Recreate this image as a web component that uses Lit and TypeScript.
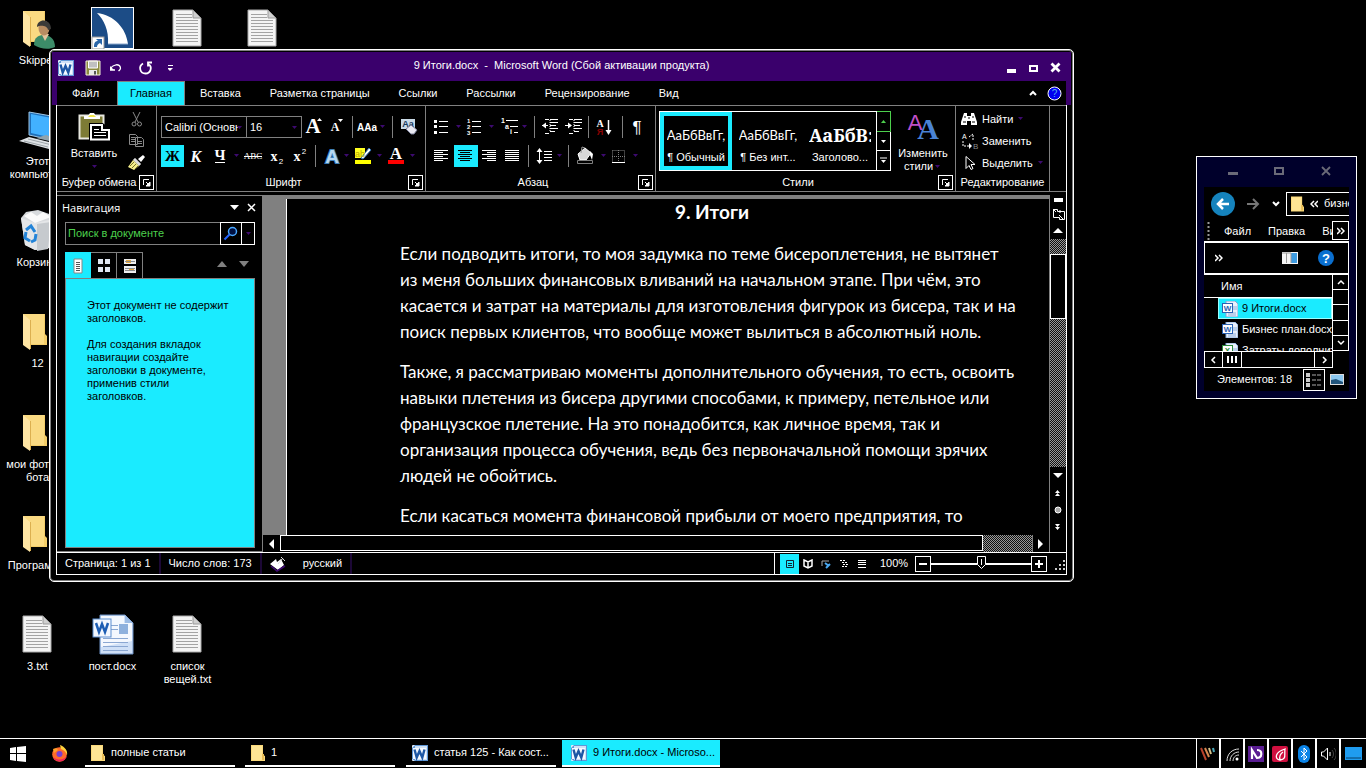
import { LitElement, html, svg, css } from "lit";
import { customElement } from "lit/decorators.js";

const ic = (w: number, h: number, body: unknown, box = `0 0 ${w} ${h}`) =>
  html`<svg width=${w} height=${h} viewBox=${box} aria-hidden="true">${body}</svg>`;

const shared = css`
  * { box-sizing: border-box; }
  svg { display: block; flex: none; }
  button, select, input {
    font: inherit; color: inherit; background: none; border: 0; padding: 0; margin: 0;
    border-radius: 0; outline: none; appearance: none;
  }
  button { display: flex; align-items: center; justify-content: center; white-space: nowrap; }
`;

const wordLogo = (s: number) => ic(s, s, svg`
  <rect x="0" y="0" width="16" height="16" rx="1" fill="#e4eefa"/>
  <path d="M0 3l3-3h13v16H3l-3-2z" fill="#5f97d6"/><path d="M3 1h12v14H3z" fill="#cfe1f6"/>
  <rect x="1" y="3" width="13" height="11" fill="#f4f9ff"/>
  <path d="M2.500 4.500l2.200 8 2.800-6.500 2.800 6.500 2.200-8" fill="none" stroke="#1d57a5" stroke-width="2.400"/>`, "0 0 16 16");

const smallFolder = (w: number, h: number) => ic(w, h, svg`
  <path d="M0 0h12v10l2 1v5H0z" fill="#fbd97b"/><path d="M1 1h10v14H1z" fill="#ffe594"/>
  <path d="M11 9h2v6h-2z" fill="#e9bd55"/>`, "0 0 14 16");

const desktopFolder = svg`
  <path d="M11 5h22v20l2 2v9H11z" fill="#f3cd68"/><path d="M12 5h20v30H19z" fill="#fada82"/>
  <path d="M11 5l7 6v30l-7-5z" fill="#ffe6a4"/><path d="M18.500 11v29" stroke="#dcb050" stroke-width="1"/>`;
const textSheet = svg`
  <path d="M11 4h20l8 8v28H11z" fill="#f4f4f4" stroke="#aaa"/><path d="M31 4v8h8z" fill="#cfcfcf" stroke="#999"/>
  <path d="M14 8.500h16M14 11.500h16M14 14.500h22M14 17.500h22M14 20.500h22M14 23.500h22M14 26.500h22M14 29.500h22M14 32.500h22M14 35.500h22" stroke="#a3a3a3"/>`;
const pictures: Record<string, unknown> = {
  folder: desktopFolder,
  text: textSheet,
  user: svg`${desktopFolder}
    <path d="M22 39c0-8 5-10 10-10s11 3 11 12c-6 3-15 2-21-2z" fill="#3c8b68"/><path d="M29 27l4 8 4-7z" fill="#e3c49d"/>
    <ellipse cx="32" cy="22" rx="5.500" ry="7.500" fill="#b98d62"/><path d="M25 21c0-9 14-9 14 2l-3 1c0-4-6-5-9-4z" fill="#3b3a38"/>`,
  shark: svg`<rect x="4" y="1" width="43" height="42" fill="#fff"/><rect x="5" y="2" width="41" height="40" fill="#1c4c86"/>
    <path d="M10 7c17 2 29 15 31 31H21C22 24 17 14 10 7z" fill="#fff"/><path d="M21 38h20" stroke="#8aa7cc"/>
    <rect x="5" y="31" width="12" height="12" fill="#fff" stroke="#999"/><path d="M7 41c0-4 1-6 4-6l-2-2h6v6l-2-2c-2 1-3 2-3 4z" fill="#2a66a8"/>`,
  computer: svg`<path d="M17 5l28 5v24l-28-6z" fill="#1f6fb8" stroke="#9dc6e6"/><path d="M19 7l26 5v20l-26-6z" fill="#42b1ff"/>
    <path d="M24 31l10-3 12 4v4z" fill="#8fa3ad"/><path d="M7 34l10-4 28 7-8 5z" fill="#dfe3e6"/><path d="M12 34l24 6M16 32l24 6" stroke="#9ba3a8"/>`,
  bin: svg`<path d="M9 10l5-6 12-2 14 5 2 7-5 26-14 2-10-5z" fill="#d7dadd"/><path d="M9 10l14 5 19-4-5 29-14 2-10-5z" fill="#e4e6e8"/>
    <path d="M25 16l14-2-3 27-11 2z" fill="#c6cace"/><path d="M12 8l7-4 6 4 6-4 8 5-16 6z" fill="#fafafa"/>
    <path d="M14 22l5-4 4 6M14 24l-1 6 5 3M24 26l-1 6-4 2" fill="none" stroke="#2384d8" stroke-width="3"/>`,
  docx: svg`<path d="M13 3h25l8 8v31H13z" fill="#cfe0f7" stroke="#6d91c4"/><path d="M14 4h23v7h8v18l-31 6z" fill="#f4f8fe"/>
    <path d="M38 3v8h8z" fill="#9dbce4"/><rect x="32" y="12" width="9" height="10" fill="#8fb1dd"/>
    <path d="M24 13.500h7M24 17.500h7M16 26.500h25M16 30.500h25M16 34.500h25M16 38.500h25" stroke="#8aa7d2"/>
    <rect x="6" y="7" width="18" height="18" fill="#f3f8ff" stroke="#5d8fd0"/><path d="M9 11l3 9 3-8 3 8 3-9" fill="none" stroke="#1d5eb4" stroke-width="2.500"/>`,
};

const desktopItems = [
  { col: 1, row: 1, pic: "user", label: "Skipper" },
  { col: 2, row: 1, pic: "shark", label: "" },
  { col: 3, row: 1, pic: "text", label: "" },
  { col: 4, row: 1, pic: "text", label: "" },
  { col: 1, row: 2, pic: "computer", label: "Этот компьютер" },
  { col: 1, row: 3, pic: "bin", label: "Корзина" },
  { col: 1, row: 4, pic: "folder", label: "12" },
  { col: 1, row: 5, pic: "folder", label: "мои фотки с бота" },
  { col: 1, row: 6, pic: "folder", label: "Программы" },
  { col: 1, row: 7, pic: "text", label: "3.txt" },
  { col: 2, row: 7, pic: "docx", label: "пост.docx" },
  { col: 3, row: 7, pic: "text", label: "список вещей.txt" },
];

const arrow = html`<svg class="dd" width="9" height="22" viewBox="0 0 9 22" aria-hidden="true"><path d="M2 9h5L4.500 12z" fill="#3d0a70"/></svg>`;
const sep = (w: number) => ic(w, 22, svg`<rect x=${Math.floor(w / 2)} y="0" width="1" height="22" fill="#808080"/>`);
const tool = (label: string, w: number, body: unknown, cls = "") =>
  html`<button class=${cls} aria-label=${label}>${ic(w, 22, body)}</button>`;
const lines = (d: string) => svg`<path d=${d} stroke="currentColor" stroke-width="1" fill="none"/>`;
const launcher = (label: string) => html`<button class="launch" aria-label=${label}>${ic(13, 13, svg`
  <path d="M3.500 9V3.500H9" stroke="#fff" fill="none"/><path d="M6 6l3 3M10 6v4H6z" stroke="#fff" fill="#fff"/>`)}</button>`;

@customElement("word-window")
export class WordWindow extends LitElement {
  static styles = [shared, css`
    :host { display: flex; flex-direction: column; background: #000; color: #fff; padding: 2px;
      border: 1px solid #fff; border-radius: 5px; box-shadow: inset 0 0 0 1px #808080; overflow: hidden; }
    .head { background: #3a006c; }
    .title { display: grid; grid-template-columns: 1fr auto 1fr; align-items: center; height: 29px; }
    .title span { padding-bottom: 3px; }
    .quick { display: flex; align-items: center; gap: 7px; padding: 3px 0 0 6px; }
    .caption { display: flex; justify-content: flex-end; gap: 11px; padding: 3px 10px 0 0; }
    .tabs { display: flex; align-items: stretch; height: 24px; margin: 0 5px; background: #000; }
    .tabs .tab { padding: 0 13px 0 14px; border: 1px solid #000; border-bottom: 0; }
    .tabs .on { background: #1aebff; color: #000; border-color: #808080; padding: 0 12px; margin-left: 4px; }
    .tabs .end { margin-left: auto; display: flex; align-items: center; gap: 10px; padding-right: 4px; }
    .frame { flex: 1; min-height: 0; display: flex; flex-direction: column; margin: 0 4px;
      border: 1px solid #fff; border-top: 0; }
    .under { height: 4px; }
    .ribbon { display: flex; height: 87px; border: solid #808080; border-width: 1px 0; }
    .group { display: flex; flex-direction: column; border-right: 1px solid #808080; flex: none; }
    .gclip { width: 100px; } .gfont { width: 269px; } .gpar { width: 230px; } .gstyle { width: 300px; } .gedit { width: 94px; }
    .tools { flex: 1; min-height: 0; display: flex; flex-direction: column; padding: 10px 0 0 4px; gap: 7px; }
    .tools.row { flex-direction: row; align-items: flex-start; padding: 5px 0 0 3px; gap: 0; }
    .line { display: flex; height: 22px; }
    .foot { display: flex; align-items: center; flex: none; height: 17px; padding: 0 2px 1px; }
    .foot span { flex: 1; text-align: center; white-space: nowrap; }
    .launch { width: 15px; height: 15px; border: 1px solid #fff; }
    .sel { background: #1aebff; color: #000; }
    .paste { flex-direction: column; justify-content: flex-start; width: 68px; }
    .paste .dd, .change .dd { margin: -4px 0; }
    .side { display: flex; flex-direction: column; }
    .combo { display: flex; position: relative; border: 1px solid #808080; height: 22px; }
    .combo + .combo { border-left: 0; }
    .combo select { width: 100%; padding: 0 8px 0 3px; overflow: hidden; text-overflow: clip; }
    .combo .dd { position: absolute; right: 2px; top: 0; }
    .c1 { width: 86px; } .c2 { width: 55px; }
    .gallery { display: flex; border: 1px solid #fff; height: 60px; }
    .style { flex-direction: column; width: 72px; border: 4px solid transparent; overflow: hidden; justify-content: flex-end; gap: 6px; padding-bottom: 2px; }
    .style.on { border-color: #1aebff; }
    .style b { font: 13px/20px Lato, sans-serif; max-width: 62px; overflow: hidden; }
    .style .h { font: bold 18px/20px "Noto Serif", "DejaVu Serif", "Liberation Serif", serif; }
    .ups { display: flex; flex-direction: column; margin: -1px -1px -1px 0; border-left: 1px solid #fff; }
    .ups button { flex: 1; width: 14px; border: 1px solid #fff; border-left: 0; }
    .ups button + button { border-top: 0; }
    .ups .g { border-color: #4dd04d; }
    .change { flex-direction: column; justify-content: flex-start; width: 64px; line-height: 13px; }
    .change i { display: flex; font-style: normal; }
    .edit { display: flex; flex-direction: column; padding: 2px 3px 0; flex: 1; align-items: flex-start; }
    .edit button { height: 22px; gap: 3px; }
    .work { flex: 1; min-height: 0; display: flex; padding-top: 3px; }
    .nav { width: 205px; flex: none; display: flex; flex-direction: column; padding: 0 7px 3px 8px; border: solid #808080; border-width: 1px 0; }
    .navhead { display: flex; align-items: center; height: 23px; gap: 8px; margin: 0 -1px 0 -3px; font: 11px/22px "Open Sans", "Noto Sans", sans-serif; }
    .navhead span { flex: 1; }
    .search { display: flex; height: 23px; margin: 3px 0 7px; border: 1px solid #808080; }
    .search input { flex: 1; min-width: 0; padding-left: 2px; color: #4dd04d; }
    .search input::placeholder { color: #4dd04d; opacity: 1; }
    .search button { width: 22px; border: 1px solid #fff; margin: -1px 0; }
    .search .more { width: 13px; border-left: 0; margin-right: -1px; }
    .ntabs { display: flex; height: 26px; align-items: stretch; }
    .ntabs .t { width: 26px; border: 1px solid #808080; border-width: 1px 1px 0 0; }
    .ntabs .on { background: #1aebff; border-color: #1aebff; }
    .ntabs .move { margin-left: auto; display: flex; align-items: center; gap: 12px; padding-right: 6px; }
    .panel { flex: 1; background: #1aebff; border: 1px solid #808080; color: #000; padding: 20px 24px 0 21px; }
    .panel p { margin: 0 0 13px; line-height: 13px; }
    .view { flex: 1; min-width: 0; display: flex; flex-direction: column; }
    .canvas { flex: 1; min-height: 0; background: #808080; padding: 4px 0 0 24px; overflow: hidden; }
    .page { height: 100%; background: #000; border-left: 1px solid #fff; padding-left: 113px; overflow: hidden;
      font: 17px/26px Lato, "Noto Sans", sans-serif; white-space: nowrap; }
    .page h1 { font-size: 19px; line-height: 26px; margin: 0 0 16px; width: 624px; text-align: center; }
    .page p { margin: 0 0 14px; }
    .page span { display: block; }
    .hscroll { display: flex; height: 17px; }
    .hscroll button { width: 17px; border-left: 1px solid #808080; }
    .hthumb { flex: 702; border: 1px solid #fff; background: #000; margin-left: 1px; height: 16px; }
    .dots { background: conic-gradient(#999 25%, #111 0 50%, #999 0 75%, #111 0) 0 0 / 2px 2px; }
    .hscroll .dots { flex: 49; }
    .vscroll { width: 17px; flex: none; display: flex; flex-direction: column; border-left: 1px solid #808080; }
    .vscroll button { width: 16px; height: 17px; flex: none; }
    .vscroll .split { height: 10px; }
    .vscroll .t0 { flex: 15; } .vscroll .t1 { flex: 151; }
    .vthumb { flex: 65; border: 1px solid #fff; background: #000; }
    .status { display: flex; align-items: center; height: 22px; border-top: 1px solid #fff; }
    .status .cell { display: flex; align-items: center; height: 21px; padding: 0 8px; border-right: 2px solid #1c0836; white-space: nowrap; }
    .status .right { margin-left: auto; display: flex; align-items: center; height: 21px; border-left: 1px solid #fff; padding-left: 5px; }
    .status .right button { width: 18px; height: 20px; }
    .status .right .sel { width: 19px; }
    .status .right .pct { width: 46px; margin-right: -2px; }
    .status .right .sq { width: 16px; height: 16px; border: 1px solid #fff; }
    .zoom { width: 100px; height: 18px; }
    .zoom::-webkit-slider-runnable-track { height: 2px; background: #fff; }
    .zoom::-webkit-slider-thumb { appearance: none; width: 9px; height: 14px; margin-top: -7px;
      background: url("data:image/svg+xml,%3Csvg xmlns='http://www.w3.org/2000/svg' width='9' height='14'%3E%3Cpath d='M.5.5h8v8l-4 4-4-4z' fill='%23000' stroke='%23fff'/%3E%3Cpath d='M4 3h1v6h-1z' fill='%23fff'/%3E%3C/svg%3E"); }
    .grip { margin: 4px 0 0 7px; }
  `];

  render() {
    const A = (x: number, y: number, s: number, t: string, extra = "") =>
      svg`<text x=${x} y=${y} font-size=${s} text-anchor="middle" fill="currentColor" font-family="Liberation Serif, serif" font-weight="bold" font-style=${extra || "normal"}>${t}</text>`;
    return html`
      <div class="head">
        <div class="title">
          <div class="quick">
            ${wordLogo(16)}
            <button aria-label="Сохранить">${ic(22, 16, svg`<path d="M1 1h14v14H1z" fill="#8c8a3f"/><path d="M3.500 1h9v7h-9z" fill="#c0c0c0" stroke="#fff"/><path d="M4 10h8v5H4z" fill="#e8e8e8"/><path d="M9 11h2v4H9z" fill="#555"/><path d="M1 1h14v14H1z" fill="none" stroke="#f4f4d8"/>`, "-4 0 22 16")}</button>
            <button aria-label="Отменить">${ic(14, 14, svg`<path d="M1 3v6h6M1.500 8.500C5 3 12 2 12.500 7c0 2-1 2-2 3" fill="none" stroke="#fff" stroke-width="1.300"/><path d="M1 4v5h5z" fill="#fff"/>`, "2 0 14 14")}</button>
            <button aria-label="Повторить">${ic(30, 14, svg`<path d="M13 2.500c-5 3-3 10 2.500 10s7-7 3-9M22 1.500h-4v4" fill="none" stroke="#fff" stroke-width="1.800"/>`, "1 0 30 14")}</button>
            <button aria-label="Настройка панели">${ic(8, 8, svg`<path d="M1 1.500h6" stroke="#fff"/><path d="M1 4h6L4 7z" fill="#fff"/>`, "2 0 8 8")}</button>
          </div>
          <span>9 Итоги.docx&nbsp; -&nbsp; Microsoft Word (Сбой активации продукта)</span>
          <div class="caption">
            <button aria-label="Свернуть">${ic(11, 12, svg`<path d="M1 7h9v4H1z" fill="#fff"/>`)}</button>
            <button aria-label="Развернуть">${ic(11, 12, svg`<path d="M2 4h7v5H2z" fill="none" stroke="#fff" stroke-width="2"/>`)}</button>
            <button aria-label="Закрыть">${ic(11, 12, svg`<path d="M1.500 1.500l8 8M9.500 1.500l-8 8" stroke="#fff" stroke-width="2.800"/>`)}</button>
          </div>
        </div>
        <div class="tabs">
          <button class="tab">Файл</button><button class="tab on">Главная</button><button class="tab">Вставка</button>
          <button class="tab">Разметка страницы</button><button class="tab">Ссылки</button><button class="tab">Рассылки</button>
          <button class="tab">Рецензирование</button><button class="tab">Вид</button>
          <div class="end">
            <button aria-label="Свернуть ленту">${ic(8, 8, svg`<path d="M1 6l3-3 3 3" fill="none" stroke="#fff" stroke-width="2"/>`)}</button>
            <button aria-label="Справка">${ic(15, 15, svg`<circle cx="7.500" cy="7.500" r="6.500" fill="#0000f0" stroke="#fff"/><text x="7.500" y="11" font-size="10" text-anchor="middle" fill="#58b0e8">?</text>`)}</button>
          </div>
        </div>
      </div>
      <div class="frame">
        <div class="ribbon">
          <div class="group gclip">
            <div class="tools row">
              <button class="paste">${ic(34, 36, svg`<path d="M2 4h24v24H2z" fill="#7d7b35"/><path d="M2.500 4.500h24v23h-24z" fill="none" stroke="#e8e8e0" stroke-width="2"/><path d="M7 8V5h4l2-3h4l2 3h4v3z" fill="#fff"/><path d="M11 6h8l-2-2h-4z" fill="#f2e64a"/><path d="M14 14h11l7 5v9H14z" fill="#000" stroke="#000" stroke-width="4"/><path d="M14 14h11v5h7v9.500H14z" fill="#000" stroke="#fff" stroke-width="2"/><path d="M17 18.500h5M17 21.500h12M17 24.500h12" stroke="#fff"/>`)}Вставить${arrow}</button>
              <div class="side">
                ${tool("Вырезать", 20, svg`<path d="M5 1l5 10M12 1L7 11" stroke="#8a8a8a" fill="none"/><circle cx="6" cy="13" r="2" fill="none" stroke="#8a8a8a"/><circle cx="11.500" cy="13" r="2" fill="none" stroke="#8a8a8a"/>`, "cut")}
                ${tool("Копировать", 20, svg`<path d="M1.500 1.500h6l2 2v8h-8zM7.500 4.500h6l2 2v7h-8z" fill="#000" stroke="#8a8a8a"/><path d="M3 4.500h4M3 6.500h4M3 8.500h4M9 8.500h5M9 10.500h5" stroke="#8a8a8a"/>`)}
                ${tool("Формат по образцу", 20, svg`<path d="M15 0l2 2-4 5-3-3z" fill="#fff"/><path d="M7 3l6 6-2 2-6-6z" fill="#ddd" stroke="#888"/><path d="M5 5l6 6-5 4-6-3z" fill="#f4ee8a"/><path d="M2 11l4-4M4 13l4-4M7 14l3-3" stroke="#77722a"/>`)}
              </div>
            </div>
            <div class="foot"><span>Буфер обмена</span>${launcher("Буфер обмена")}</div>
          </div>
          <div class="group gfont">
            <div class="tools">
              <div class="line">
                <label class="combo c1"><select aria-label="Шрифт"><option>Calibri (Основн</option></select>${arrow}</label>
                <label class="combo c2"><select aria-label="Размер"><option>16</option></select>${arrow}</label>
                ${tool("Увеличить размер", 24, svg`${A(11, 17, 21, "A")}<path d="M15 5h5l-2.500-3z" fill="#fff"/>`)}
                ${tool("Уменьшить размер", 24, svg`${A(9, 15, 12, "A")}<path d="M12 3h5l-2.500 3z" fill="#fff"/>`)}
                ${sep(5)}
                ${tool("Регистр", 23, svg`<text x="12" y="15" font-size="10" text-anchor="middle" fill="#fff" font-weight="bold">AAa</text>`)}${arrow}
                ${sep(10)}
                ${tool("Очистить формат", 24, svg`<path d="M4 3h14v10H4z" fill="#c9d9e6"/><text x="11" y="11" font-size="9" font-weight="bold" text-anchor="middle" fill="#16375c">Aa</text><path d="M9 13l5-4 6 5-3 4h-3z" fill="#e9e9f2" stroke="#7b7f99"/>`)}
              </div>
              <div class="line">
                ${tool("Полужирный", 23, A(11.5, 16, 15, "Ж"), "sel")}
                ${tool("Курсив", 24, A(12, 17, 16, "К", "italic"))}
                ${tool("Подчеркнутый", 24, svg`${A(12, 15, 15, "Ч")}<path d="M7 17.500h10" stroke="#fff"/>`)}${arrow}
                ${tool("Зачеркнутый", 24, svg`<text x="12" y="14" font-size="9" text-anchor="middle" fill="#fff" font-family="Liberation Serif">ABC</text><path d="M3 11.500h18" stroke="#fff"/>`)}
                ${tool("Подстрочный", 23, svg`${A(9, 16, 14, "x")}<text x="16" y="19" font-size="8" text-anchor="middle" fill="#fff">2</text>`)}
                ${tool("Надстрочный", 23, svg`${A(9, 16, 14, "x")}<text x="16" y="9" font-size="8" text-anchor="middle" fill="#fff">2</text>`)}
                ${sep(9)}
                ${tool("Эффекты текста", 22, svg`<text x="12" y="18" font-size="19" font-weight="bold" text-anchor="middle" fill="#b8d8f0" stroke="#3f7fb8" stroke-width="2" paint-order="stroke">A</text>`)}${arrow}
                ${tool("Выделение", 24, svg`<path d="M4 3h10v10H4z" fill="#ffff20"/><path d="M4 15h16v4H4z" fill="#ffff00"/><path d="M18 3l2 2-8 9-2-1z" fill="#fff" stroke="#2f6fb0"/><text x="9" y="12" font-size="9" text-anchor="middle" fill="#b8a800">ab</text>`)}${arrow}
                ${tool("Цвет текста", 24, svg`${A(12, 14, 17, "A")}<path d="M4 15h16v4H4z" fill="#f00"/>`)}${arrow}
              </div>
            </div>
            <div class="foot"><span>Шрифт</span>${launcher("Шрифт")}</div>
          </div>
          <div class="group gpar">
            <div class="tools">
              <div class="line">
                ${tool("Маркеры", 24, svg`<path d="M4 4h3v3H4zM4 9h3v3H4zM4 15h3v3H4z" fill="#fff"/>${lines("M9 5.500h9M9 10.500h9M9 16.500h9")}`)}${arrow}
                ${tool("Нумерация", 24, svg`<g font-size="6" fill="#fff" font-weight="bold"><text x="4" y="7">1</text><text x="4" y="13">2</text><text x="4" y="19">3</text></g>${lines("M9 5.500h9M9 10.500h9M9 16.500h9")}`)}${arrow}
                ${tool("Многоуровневый список", 24, svg`<g font-size="7" fill="#fff" font-weight="bold"><text x="5" y="7">1</text><text x="9" y="13">a</text><text x="14" y="18">i</text></g>${lines("M10 4.500h12M14 10.500h8M18 16.500h4")}`)}${arrow}
                ${sep(10)}
                ${tool("Уменьшить отступ", 24, svg`${lines("M6 3.500h4M11 3.500h8M11 6.500h8M11 9.500h6M11 12.500h8M11 15.500h5M6 17.500h4M3 9.500h6")}<path d="M3 9.500l4-3v6z" fill="#fff"/><path d="M11 4v12" stroke="#fff" stroke-dasharray="1 1"/>`)}
                ${tool("Увеличить отступ", 23, svg`${lines("M6 3.500h4M11 3.500h8M11 6.500h8M11 9.500h6M11 12.500h8M11 15.500h5M6 17.500h4M2 9.500h6")}<path d="M9 9.500l-4-3v6z" fill="#fff"/><path d="M11 4v12" stroke="#fff" stroke-dasharray="1 1"/>`)}
                ${sep(5)}
                ${tool("Сортировка", 29, svg`${A(9, 11, 10, "A")}<text x="9" y="19" font-size="9" font-weight="bold" text-anchor="middle" fill="#8c0000">Я</text><path d="M17.500 4v12" stroke="#fff" stroke-width="1.500"/><path d="M14.500 14h6l-3 5z" fill="#fff"/>`)}
                ${sep(4)}
                ${tool("Знаки", 26, svg`<text x="13" y="17" font-size="17" text-anchor="middle" fill="#fff">¶</text>`)}
              </div>
              <div class="line">
                ${tool("По левому краю", 24, lines("M4 5.500h14M4 7.500h9M4 9.500h14M4 11.500h9M4 13.500h14M4 15.500h9"))}
                ${tool("По центру", 24, lines("M4 5.500h14M6 7.500h10M4 9.500h14M6 11.500h10M4 13.500h14M6 15.500h10"), "sel")}
                ${tool("По правому краю", 23, lines("M4 5.500h14M9 7.500h9M4 9.500h14M9 11.500h9M4 13.500h14M9 15.500h9"))}
                ${tool("По ширине", 23, lines("M4 5.500h14M4 7.500h14M4 9.500h14M4 11.500h14M4 13.500h14M4 15.500h14"))}
                ${sep(9)}
                ${tool("Интервал", 22, svg`${lines("M11 6.500h8M11 9.500h8M11 12.500h8M11 15.500h8M6.500 5v13")}<path d="M3.500 7h6l-3-4zM3.500 15h6l-3 4z" fill="#fff"/>`)}${arrow}
                ${sep(8)}
                ${tool("Заливка", 27, svg`<path d="M6 9l7-6 6 5-5 7H8z" fill="#d8d8d8" stroke="#fff"/><path d="M18 6l3 3-1 6-2-5z" fill="#fff"/><path d="M13 3l-3-1-1 6" stroke="#999" fill="none"/><path d="M5.500 15.500h15v3h-15z" fill="#000" stroke="#808080"/>`)}${arrow}
                ${tool("Границы", 23, svg`<path d="M4.500 5.500h12v12M4.500 5.500v12M10.500 5v13M4 11.500h13" fill="none" stroke="#808080" stroke-dasharray="1 1"/><path d="M4 17.500h13" stroke="#fff"/>`)}${arrow}
              </div>
            </div>
            <div class="foot"><span>Абзац</span>${launcher("Абзац")}</div>
          </div>
          <div class="group gstyle">
            <div class="tools row">
              <div class="gallery">
                <button class="style on"><b>АаБбВвГг,</b>¶ Обычный</button>
                <button class="style"><b>АаБбВвГг,</b>¶ Без инт...</button>
                <button class="style"><b class="h">АаБбВ:</b>Заголово...</button>
                <div class="ups">
                  <button class="g" aria-label="Вверх">${ic(7, 5, svg`<path d="M1 4h5L3.500 1z" fill="#4dd04d"/>`)}</button>
                  <button aria-label="Вниз">${ic(7, 5, svg`<path d="M1 1h5L3.500 4z" fill="#fff"/>`)}</button>
                  <button aria-label="Ещё">${ic(7, 8, svg`<path d="M0 1h7" stroke="#fff"/><path d="M1 3h5L3.500 6z" fill="#fff"/>`)}</button>
                </div>
              </div>
              <button class="change">${ic(32, 36, svg`<text x="8" y="19" font-size="22" text-anchor="middle" fill="#c050c8">A</text><text x="21" y="28" font-size="30" font-weight="bold" text-anchor="middle" fill="#4a83d4" font-family="Liberation Serif">A</text>`)}Изменить<i>стили${arrow}</i></button>
            </div>
            <div class="foot"><span>Стили</span>${launcher("Стили")}</div>
          </div>
          <div class="group gedit">
            <div class="edit">
              <button>${ic(20, 18, svg`<path d="M5 3h3v3h4V3h3l3 9v3h-6v-4h-4v4H2v-3z" fill="#fff"/><path d="M6 6v2M14 6v2M4 12h3M13 12h3M10 7v2" stroke="#000"/>`)}Найти ${arrow}</button>
              <button>${ic(20, 18, svg`<text x="3" y="7" font-size="7" fill="#fff">A</text><text x="14" y="17" font-size="8" fill="#888">B</text><path d="M4 9v5h8M10 5l4-3v6" fill="none" stroke="#fff" stroke-dasharray="2 1"/><path d="M10 11l3 3-3 3z" fill="#fff"/>`)}Заменить</button>
              <button>${ic(20, 18, svg`<path d="M7 2.500v12l3-3 2 4 2-1-2-4h4z" fill="#000" stroke="#fff"/>`)}Выделить ${arrow}</button>
            </div>
            <div class="foot"><span>Редактирование</span></div>
          </div>
        </div>
        <div class="work">
          <div class="nav">
            <div class="navhead"><span>Навигация</span>
              <button aria-label="Параметры">${ic(9, 9, svg`<path d="M0 2h9L4.500 7z" fill="#fff"/>`)}</button>
              <button aria-label="Закрыть">${ic(9, 9, svg`<path d="M1 1l7 7M8 1L1 8" stroke="#fff" stroke-width="1.500"/>`, "0 0 9 9")}</button>
            </div>
            <div class="search">
              <input aria-label="Поиск в документе" placeholder="Поиск в документе">
              <button aria-label="Найти">${ic(16, 16, svg`<circle cx="9.500" cy="5.500" r="4" fill="#001040" stroke="#49a8ff" stroke-width="1.500"/><path d="M6.500 8.500l-5 5" stroke="#2464ff" stroke-width="2"/>`)}</button>
              <button class="more" aria-label="Параметры поиска">${arrow}</button>
            </div>
            <div class="ntabs">
              <button class="t on" aria-label="Заголовки">${ic(10, 16, svg`<path d="M1 1h8v14H1z" fill="#fff" stroke="#888"/><path d="M3 4.500h4M3 6.500h4M3 8.500h4M3 10.500h4M3 12.500h4" stroke="#555"/>`)}</button>
              <button class="t" aria-label="Страницы">${ic(14, 16, svg`<path d="M1 1h5v5H1zM8 1h5v5H8zM1 9h5v5H1zM8 9h5v5H8z" fill="#dfe6f2"/>`)}</button>
              <button class="t" aria-label="Результаты">${ic(14, 16, svg`<path d="M1 1h12v5H1zM1 8h12v7H1z" fill="#eee"/><path d="M3 2h5v3H3zM6 10h5v3H6z" fill="#e6a63a"/><path d="M2 3.500h10M2 10.500h10M2 12.500h10" stroke="#8a8a8a"/>`)}</button>
              <div class="move">
                <button aria-label="Назад">${ic(10, 8, svg`<path d="M0 6h10L5 0z" fill="#808080"/>`)}</button>
                <button aria-label="Вперёд">${ic(10, 8, svg`<path d="M0 0h10L5 6z" fill="#808080"/>`)}</button>
              </div>
            </div>
            <div class="panel">
              <p>Этот документ не содержит заголовков.</p>
              <p>Для создания вкладок навигации создайте заголовки в документе, применив стили заголовков.</p>
            </div>
          </div>
          <div class="view">
            <div class="canvas">
              <article class="page">
                <h1>9. Итоги</h1>
                <p><span>Если подводить итоги, то моя задумка по теме бисероплетения, не вытянет</span>
                <span>из меня больших финансовых вливаний на начальном этапе. При чём, это</span>
                <span>касается и затрат на материалы для изготовления фигурок из бисера, так и на</span>
                <span>поиск первых клиентов, что вообще может вылиться в абсолютный ноль.</span></p>
                <p><span>Также, я рассматриваю моменты дополнительного обучения, то есть, освоить</span>
                <span>навыки плетения из бисера другими способами, к примеру, петельное или</span>
                <span>французское плетение. На это понадобится, как личное время, так и</span>
                <span>организация процесса обучения, ведь без первоначальной помощи зрячих</span>
                <span>людей не обойтись.</span></p>
                <p><span>Если касаться момента финансовой прибыли от моего предприятия, то</span></p>
              </article>
            </div>
            <div class="hscroll">
              <button aria-label="Влево">${ic(6, 10, svg`<path d="M6 0v10L1 5z" fill="#fff"/>`)}</button>
              <div class="hthumb"></div><div class="dots"></div>
              <button aria-label="Вправо">${ic(6, 10, svg`<path d="M0 0v10l5-5z" fill="#fff"/>`)}</button>
            </div>
          </div>
          <div class="vscroll">
            <button class="split" aria-label="Разделить">${ic(10, 10, svg`<path d="M1 3h9v4H1z" fill="#fff"/>`)}</button>
            <button aria-label="Линейка">${ic(14, 14, svg`<path d="M2.500 2.500h4v2h7v8h-5v-2h-6z" fill="#000" stroke="#fff"/><path d="M2 2l3 3M8 8l4 4M9 3v3" stroke="#fff"/>`)}</button>
            <button aria-label="Вверх">${ic(10, 6, svg`<path d="M0 5h10L5 0z" fill="#fff"/>`)}</button>
            <div class="dots t0"></div><div class="vthumb"></div><div class="dots t1"></div>
            <button aria-label="Вниз">${ic(10, 6, svg`<path d="M0 0h10L5 5z" fill="#fff"/>`)}</button>
            <button aria-label="Предыдущая страница">${ic(8, 8, svg`<path d="M1 4h5L3.500 1zM1 7h5L3.500 4z" fill="#fff"/>`)}</button>
            <button aria-label="Объект перехода">${ic(8, 8, svg`<circle cx="4" cy="4" r="3" fill="#aaa" stroke="#fff"/>`)}</button>
            <button aria-label="Следующая страница">${ic(8, 8, svg`<path d="M1 1h5L3.500 4zM1 4h5L3.500 7z" fill="#fff"/>`)}</button>
            <button aria-hidden="true" tabindex="-1"></button>
          </div>
        </div>
        <div class="status">
          <div class="cell">Страница: 1 из 1</div><div class="cell">Число слов: 173</div>
          <div class="cell">${ic(33, 16, svg`<path d="M0 8l6-5 1 3 4-3 3 6-6 5z" fill="#fff"/><path d="M1 10l6 5 8-5" stroke="#3d0a70" fill="none" stroke-width="1.500"/><path d="M8 8l5-6M11 1l4 4" stroke="#ddd"/>`)}русский</div>
          <div class="right">
            <button class="sel" aria-label="Разметка">${ic(10, 10, svg`<path d="M1.500 1.500h7v7h-7zM3 4.500h4M3 6.500h4" fill="none" stroke="#123"/>`)}</button>
            <button aria-label="Чтение">${ic(10, 10, svg`<path d="M1 1l4 2 4-2v6L5 9 1 7zM5 3v6" fill="none" stroke="#fff" stroke-width="1.500"/>`)}</button>
            <button aria-label="Веб">${ic(10, 10, svg`<path d="M1 7V2h7" fill="none" stroke="#aaa"/><path d="M4 4l4 3M5 9l4-4" stroke="#4aa8f0" stroke-width="2"/>`)}</button>
            <button aria-label="Структура">${ic(10, 10, svg`<path d="M1 1.500h5M3 3.500h6M4 5.500h5M3 7.500h6" stroke="#fff" stroke-dasharray="2 1"/>`)}</button>
            <button aria-label="Черновик">${ic(10, 10, svg`<path d="M1 1.500h8M1 3.500h8M1 5.500h8M1 8.500h8" stroke="#fff"/>`)}</button>
            <button class="pct">100%</button>
            <button class="sq" aria-label="Уменьшить">${ic(10, 10, svg`<path d="M1 4h8v2H1z" fill="#fff"/>`)}</button>
            <input class="zoom" type="range" min="0" max="100" value="50" aria-label="Масштаб">
            <button class="sq" aria-label="Увеличить">${ic(10, 10, svg`<path d="M1 4h8v2H1zM4 1h2v8H4z" fill="#fff"/>`)}</button>
            <svg class="grip" width="12" height="14" viewBox="0 0 12 14" aria-hidden="true"><path d="M9 1h2v2H9zM5 5h2v2H5zM9 5h2v2H9zM1 9h2v2H1zM5 9h2v2H5zM9 9h2v2H9z" fill="#ccc"/></svg>
          </div>
        </div>
      </div>
      <div class="under"></div>`;
  }
}

@customElement("explorer-window")
export class ExplorerWindow extends LitElement {
  static styles = [shared, css`
    :host { display: block; background: #00002b; color: #fff; border: 1px solid #fff; padding: 0 7px 7px; }
    .cap { display: grid; grid-template-columns: repeat(3, 1fr); height: 30px; margin-left: 6px; align-items: center; }
    .body { background: #000; overflow: hidden; }
    .addr { display: flex; align-items: center; height: 33px; padding-left: 7px; gap: 12px; }
    .path { display: flex; align-items: center; gap: 6px; flex: 1; min-width: 0; overflow: hidden; white-space: nowrap; height: 24px;
      border: 1px solid #fff; border-right: 0; padding-left: 4px; margin-left: -6px; }
    .menu { display: flex; align-items: center; height: 21px; }
    .menu .items { flex: 1; min-width: 0; display: flex; gap: 17px; padding: 2px 0 0 10px; overflow: hidden; }
    .menu .more { width: 17px; height: 19px; border: 1px solid #fff; }
    .bar { display: flex; align-items: center; height: 34px; border: solid #fff; border-width: 2px 1px; padding: 0 14px 0 10px; gap: 20px; }
    .bar .push { margin-left: auto; }
    .list { display: flex; height: 76px; }
    .files { flex: 1; min-width: 0; overflow: hidden; }
    .hd { height: 23px; line-height: 23px; padding-left: 17px; border-bottom: 1px solid #fff; }
    .file { display: flex; align-items: center; gap: 4px; height: 21px; margin-left: 14px; padding-left: 4px; white-space: nowrap; }
    .file.on { background: #1aebff; color: #000; border: 1px solid #9ff; padding-left: 3px; }
    .vs { display: flex; flex-direction: column; width: 17px; border: solid #fff; border-width: 0 1px; }
    .vs * { flex: 1; width: 15px; border-bottom: 1px solid #fff; }
    .vs button svg { border: 0; flex: none; height: 8px; width: 8px; }
    .hs { display: flex; height: 17px; width: 129px; border: 1px solid #fff; }
    .hs button { width: 17px; }
    .hs .thumb { width: 20px; border: solid #fff; border-width: 0 1px; display: flex; justify-content: center; gap: 2px; padding: 4px 0; }
    .hs .thumb i { width: 2px; background: #fff; }
    .hs .gap { flex: 1; border-right: 1px solid #fff; }
    .st { display: flex; align-items: center; height: 23px; padding-left: 13px; white-space: nowrap; }
    .st .v { width: 22px; height: 22px; border: 1px solid #fff; margin-left: auto; }
    .st .w { width: 24px; }
  `];

  render() {
    const chev = (d: string) => ic(8, 8, svg`<path d=${d} fill="none" stroke="#fff" stroke-width="1.500"/>`);
    const doc = (fill: string, t: string) => ic(16, 16, svg`<path d="M4 0h9l3 3v13H4z" fill="#e8f0fb" stroke="#7fa4d4"/><path d="M11 6h4M11 8h4M6 12h8M6 14h8" stroke="#8fb0dc"/><rect x="0.500" y="2.500" width="10" height="9" fill="#fff" stroke=${fill}/><text x="5.500" y="10" font-size="8" font-weight="bold" text-anchor="middle" fill=${fill}>${t}</text>`);
    return html`
      <div class="cap">
        <button aria-label="Свернуть">${ic(10, 12, svg`<path d="M0 6h10v3H0z" fill="#6a6a78"/>`)}</button>
        <button aria-label="Развернуть">${ic(10, 12, svg`<path d="M1 2h8v6H1z" fill="none" stroke="#6a6a78" stroke-width="2"/>`)}</button>
        <button aria-label="Закрыть">${ic(10, 12, svg`<path d="M1 1l8 8M9 1l-8 8" stroke="#6a6a78" stroke-width="1.800"/>`)}</button>
      </div>
      <div class="body">
        <div class="addr">
          <button aria-label="Назад">${ic(24, 24, svg`<circle cx="12" cy="12" r="12" fill="#1583bd"/><path d="M18 12H7M12 7l-5 5 5 5" fill="none" stroke="#fff" stroke-width="2.500"/>`)}</button>
          <button aria-label="Вперёд">${ic(13, 14, svg`<path d="M0 7h11M6 2l5 5-5 5" fill="none" stroke="#777" stroke-width="2"/>`)}</button>
          <button aria-label="Недавние">${ic(8, 8, svg`<path d="M1 2l3 3 3-3" fill="none" stroke="#fff" stroke-width="2"/>`)}</button>
          <div class="path">${smallFolder(13, 16)}${chev("M4 1L1 4l3 3M8 1L5 4l3 3")}<span>бизнес</span></div>
        </div>
        <div class="menu">
          ${ic(10, 20, svg`<path d="M4.500 1v19" stroke="#999" stroke-width="2" stroke-dasharray="2 2"/>`)}
          <div class="items"><span>Файл</span><span>Правка</span><span>Вид</span></div>
          <button class="more" aria-label="Ещё">${chev("M0 1l3 3-3 3M4 1l3 3-3 3")}</button>
        </div>
        <div class="bar">
          <button aria-label="Команды">${chev("M0 1l3 3-3 3M4 1l3 3-3 3")}</button>
          <button class="push" aria-label="Область просмотра">${ic(16, 12, svg`<path d="M0 0h16v12H0z" fill="#f4f4f4"/><path d="M9 1h6v10H9z" fill="#3d9be0"/><path d="M0 1h9M4.500 1v10M9 1v10" stroke="#999"/>`)}</button>
          <button aria-label="Справка">${ic(16, 16, svg`<circle cx="8" cy="8" r="8" fill="#0a6fd0"/><text x="8" y="12.500" font-size="13" font-weight="bold" text-anchor="middle" fill="#fff">?</text>`)}</button>
        </div>
        <div class="list">
          <div class="files">
            <div class="hd">Имя</div>
            <div class="file on">${doc("#2a62b4", "W")}9 Итоги.docx</div>
            <div class="file">${doc("#2a62b4", "W")}Бизнес план.docx</div>
            <div class="file">${doc("#2c8a3c", "X")}Затраты дополнительные</div>
          </div>
          <div class="vs"><button aria-label="Вверх">${chev("M1 6l3-3 3 3")}</button><i></i><i></i><i></i><button aria-label="Вниз">${chev("M1 2l3 3 3-3")}</button></div>
        </div>
        <div class="hs"><button aria-label="Влево">${chev("M5 1L2 4l3 3")}</button><div class="thumb"><i></i><i></i><i></i></div><div class="gap"></div><button aria-label="Вправо">${chev("M3 1l3 3-3 3")}</button></div>
        <div class="st">Элементов: 18
          <button class="v" aria-label="Таблица">${ic(16, 14, svg`<path d="M0 0h4v4H0zM0 5h4v4H0zM0 10h4v4H0z" fill="#ccc"/><path d="M6 2h4M11 2h4M6 7h4M11 7h4M6 12h4M11 12h4" stroke="#aaa"/>`)}</button>
          <button class="w" aria-label="Значки">${ic(14, 11, svg`<path d="M0 0h14v11H0z" fill="#ddd"/><path d="M1 1h12v9H1z" fill="#8cc8f0"/><path d="M1 10V6l5-1 7 3v2z" fill="#22557c"/>`)}</button>
        </div>
      </div>`;
  }
}

@customElement("task-bar")
export class TaskBar extends LitElement {
  static styles = [shared, css`
    :host { display: flex; align-items: stretch; height: 30px; background: #000; color: #fff; border-top: 1px solid #fff; }
    .start { width: 36px; }
    .fox { width: 46px; margin-right: 3px; }
    .task { width: 150px; justify-content: flex-start; gap: 6px; padding-left: 6px; border-bottom: 2px solid #fff; margin: 1px 10px 1px 0; }
    .task.last { margin-left: 1px; margin-right: 6px; }
    .task.on { width: 158px; background: #1aebff; color: #000; padding-left: 9px; }
    .tray { margin-left: auto; display: flex; background: #fff; gap: 2px; padding-left: 1px; }
    .tray button { width: 22px; background: #000; }
    .tray .wide { width: 25px; }
  `];

  render() {
    return html`
      <button class="start" aria-label="Пуск">${ic(16, 16, svg`<path d="M0 2l6-1v6H0zM7 1l9-1v7H7zM0 8h6v7l-6-1zM7 8h9v8l-9-1z" fill="#fff"/>`)}</button>
      <button class="fox" aria-label="Firefox">${ic(17, 17, svg`<circle cx="8.500" cy="9.500" r="7.300" fill="#ff6a2a"/><path d="M9 0c5 2 8 6 7 10-1-3-3-5-6-6z" fill="#ffd23c"/><path d="M2 4c2-1 4-1 5 1l-4 3z" fill="#ffa12c"/><path d="M2 12c2 6 12 6 14-1-3 4-9 5-14 1z" fill="#f0245c"/><circle cx="8.500" cy="9" r="3" fill="#7a3fd0"/>`)}</button>
      <button class="task">${smallFolder(14, 16)}полные статьи</button>
      <button class="task">${smallFolder(14, 16)}1</button>
      <button class="task last">${wordLogo(16)}статья 125 - Как сост...</button>
      <button class="task on">${wordLogo(16)}9 Итоги.docx - Microso...</button>
      <div class="tray">
        <button aria-label="Программа">${ic(16, 16, svg`<g stroke-width="2"><path d="M1 2l5 12" stroke="#b8432c"/><path d="M5 2l4 9" stroke="#d98a52"/><path d="M9 2l2 6" stroke="#d9c48a"/><path d="M13 2l1 4" stroke="#4aa6b8"/></g>`)}</button>
        <button aria-label="Сеть">${ic(16, 16, svg`<g fill="none" stroke="#ddd"><path d="M3 15C3 8 8 3 15 3"/><path d="M6 15c0-5 4-9 9-9"/><path d="M9 15c0-3 2-6 6-6"/></g><circle cx="13" cy="13" r="1.500" fill="#fff"/>`)}</button>
        <button aria-label="NVDA">${ic(16, 16, svg`<rect width="16" height="16" fill="#5a1d92"/><path d="M4 13V4l5 8c4 0 5-3 4-6-1-2-4-2-4-2" fill="none" stroke="#fff" stroke-width="2.200"/>`)}</button>
        <button aria-label="Антивирус">${ic(16, 16, svg`<rect width="16" height="16" rx="2" fill="#d01040"/><path d="M8 14c-6-1-5-8 5-11-1 6 2 10-5 11zM8 14c-1-4 0-6 3-8" fill="none" stroke="#fff" stroke-width="1.300"/>`)}</button>
        <button aria-label="Bluetooth">${ic(14, 18, svg`<rect x="1" width="12" height="18" rx="6" fill="#0a84e8"/><path d="M4 6l6 6-3 3V3l3 3-6 6" fill="none" stroke="#fff"/>`)}</button>
        <button aria-label="Звук">${ic(16, 14, svg`<path d="M1.500 5h2l4-4v12l-4-4h-2z" fill="none" stroke="#fff"/><path d="M10 5v4" stroke="#fff"/><path d="M12 3c2 2 2 6 0 8M14 1c3 3 3 9 0 12" stroke="#444" fill="none"/>`)}</button>
        <button class="wide" aria-label="Рабочий стол">${ic(17, 13, svg`<rect width="17" height="13" fill="#1f9cf0"/><path d="M1 11h15" stroke="#07406a"/>`)}</button>
      </div>`;
  }
}

@customElement("app-root")
export class AppRoot extends LitElement {
  static styles = [shared, css`
    :host { display: flex; flex-direction: column; height: 100vh; position: relative; overflow: hidden; background: #000; color: #fff;
      font: 11px/13px "Liberation Sans", Arial, sans-serif; }
    .desk { flex: 1; min-height: 0; display: grid; grid-template-columns: repeat(4, 75px); grid-template-rows: repeat(7, 101px); }
    .item { display: flex; flex-direction: column; align-items: center; padding: 6px 2px 0; text-align: center; color: inherit; text-decoration: none; }
    .item svg { margin-right: 3px; }
    .item span { max-width: 71px; }
    word-window { position: absolute; left: 49px; top: 49px; right: 292px; bottom: 186px; }
    explorer-window { position: absolute; right: 9px; top: 156px; width: 161px; }
  `];

  render() {
    return html`
      <main class="desk">
        ${desktopItems.map(i => html`<a class="item" href="#" aria-label=${i.label || i.pic} style="grid-area: ${i.row} / ${i.col}">
          ${ic(48, 48, pictures[i.pic])}<span>${i.label}</span></a>`)}
      </main>
      <word-window></word-window>
      <explorer-window></explorer-window>
      <task-bar></task-bar>`;
  }
}
